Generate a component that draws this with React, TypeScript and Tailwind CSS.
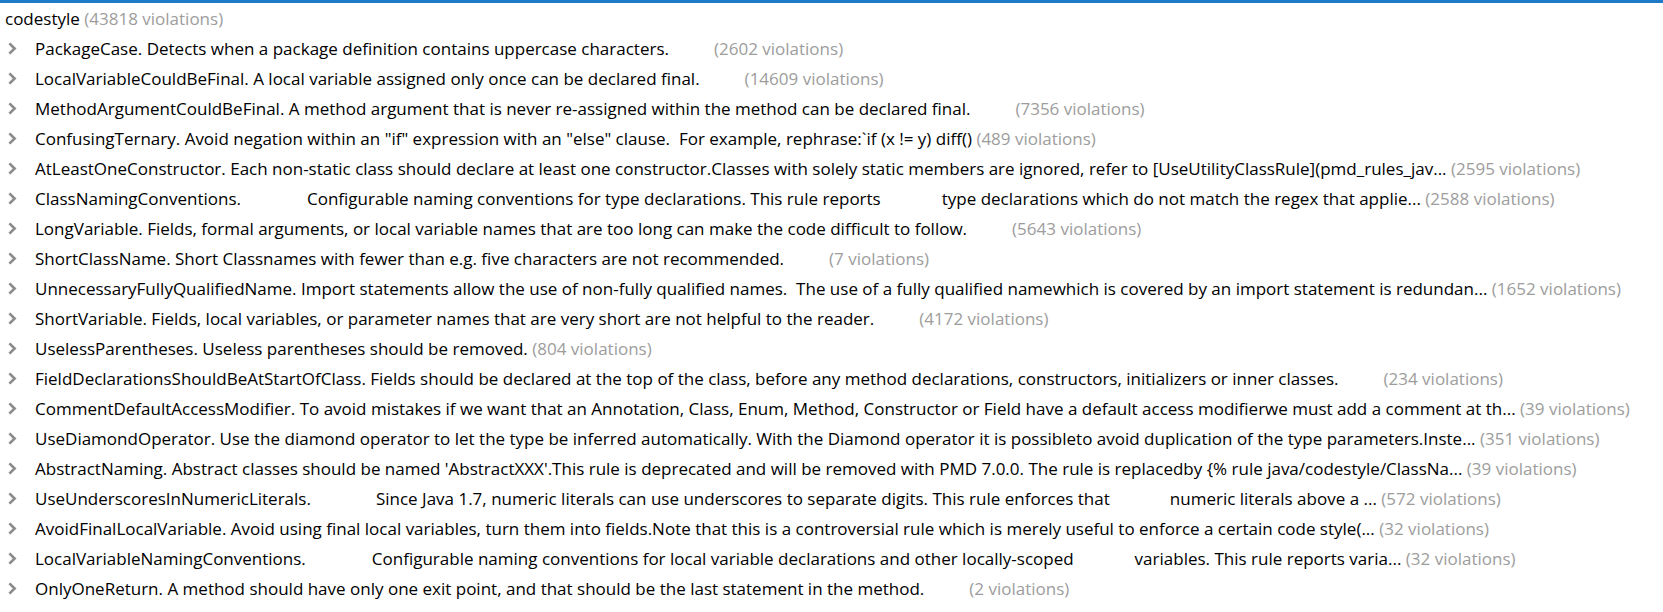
import React from "react";

type Rule = {
  parts: string[];
  gaps?: number[];
  trailingGap?: boolean;
  count: number;
};

const rules: Rule[] = [
  { parts: ["PackageCase. Detects when a package definition contains uppercase characters."], trailingGap: true, count: 2602 },
  { parts: ["LocalVariableCouldBeFinal. A local variable assigned only once can be declared final."], trailingGap: true, count: 14609 },
  { parts: ["MethodArgumentCouldBeFinal. A method argument that is never re-assigned within the method can be declared final."], trailingGap: true, count: 7356 },
  { parts: ['ConfusingTernary. Avoid negation within an "if" expression with an "else" clause.  For example, rephrase:`if (x != y) diff()'], count: 489 },
  { parts: ["AtLeastOneConstructor. Each non-static class should declare at least one constructor.Classes with solely static members are ignored, refer to [UseUtilityClassRule](pmd_rules_jav..."], count: 2595 },
  {
    parts: [
      "ClassNamingConventions.",
      "Configurable naming conventions for type declarations. This rule reports",
      "type declarations which do not match the regex that applie...",
    ],
    gaps: [66, 61],
    count: 2588,
  },
  { parts: ["LongVariable. Fields, formal arguments, or local variable names that are too long can make the code difficult to follow."], trailingGap: true, count: 5643 },
  { parts: ["ShortClassName. Short Classnames with fewer than e.g. five characters are not recommended."], trailingGap: true, count: 7 },
  { parts: ["UnnecessaryFullyQualifiedName. Import statements allow the use of non-fully qualified names.  The use of a fully qualified namewhich is covered by an import statement is redundan..."], count: 1652 },
  { parts: ["ShortVariable. Fields, local variables, or parameter names that are very short are not helpful to the reader."], trailingGap: true, count: 4172 },
  { parts: ["UselessParentheses. Useless parentheses should be removed."], count: 804 },
  { parts: ["FieldDeclarationsShouldBeAtStartOfClass. Fields should be declared at the top of the class, before any method declarations, constructors, initializers or inner classes."], trailingGap: true, count: 234 },
  { parts: ["CommentDefaultAccessModifier. To avoid mistakes if we want that an Annotation, Class, Enum, Method, Constructor or Field have a default access modifierwe must add a comment at th..."], count: 39 },
  { parts: ["UseDiamondOperator. Use the diamond operator to let the type be inferred automatically. With the Diamond operator it is possibleto avoid duplication of the type parameters.Inste..."], count: 351 },
  { parts: ["AbstractNaming. Abstract classes should be named 'AbstractXXX'.This rule is deprecated and will be removed with PMD 7.0.0. The rule is replacedby {% rule java/codestyle/ClassNa..."], count: 39 },
  {
    parts: [
      "UseUnderscoresInNumericLiterals.",
      "Since Java 1.7, numeric literals can use underscores to separate digits. This rule enforces that",
      "numeric literals above a ...",
    ],
    gaps: [65, 60],
    count: 572,
  },
  { parts: ["AvoidFinalLocalVariable. Avoid using final local variables, turn them into fields.Note that this is a controversial rule which is merely useful to enforce a certain code style(..."], count: 32 },
  {
    parts: [
      "LocalVariableNamingConventions.",
      "Configurable naming conventions for local variable declarations and other locally-scoped",
      "variables. This rule reports varia...",
    ],
    gaps: [66, 61],
    count: 32,
  },
  { parts: ["OnlyOneReturn. A method should have only one exit point, and that should be the last statement in the method."], trailingGap: true, count: 2 },
];

function Chevron() {
  return (
    <svg width="10" height="13" viewBox="0 0 10 13" className="block">
      <path d="M2.4 1.4 L7.6 6.5 L2.4 11.6" fill="none" stroke="#8c8c8c" strokeWidth="2.7" />
    </svg>
  );
}

function RuleRow({ rule }: { rule: Rule }) {
  return (
    <div className="flex h-[30px] items-center whitespace-pre">
      <div className="flex w-[35px] shrink-0 items-center pl-[7px] pb-[1px]">
        <Chevron />
      </div>
      {rule.parts.map((p, i) => (
        <React.Fragment key={i}>
          {i > 0 && <span className="inline-block" style={{ width: rule.gaps![i - 1] }} />}
          <span className="text-black">{p}</span>
        </React.Fragment>
      ))}
      {rule.trailingGap ? <span className="inline-block w-[45px]" /> : <span> </span>}
      <span className="text-[#9d9d9d]">({rule.count} violations)</span>
    </div>
  );
}

export default function App() {
  return (
    <div className="min-h-[612px] bg-white font-['Open_Sans',sans-serif] text-[17px] leading-[30px]">
      <div className="h-[3px] bg-[#1e7bc8]" />
      <div className="flex h-[31px] items-center whitespace-pre pl-[5px] pt-[1px]">
        <span className="text-black">codestyle</span>
        <span className="text-[#9d9d9d]"> (43818 violations)</span>
      </div>
      {rules.map((r, i) => (
        <RuleRow key={i} rule={r} />
      ))}
    </div>
  );
}
